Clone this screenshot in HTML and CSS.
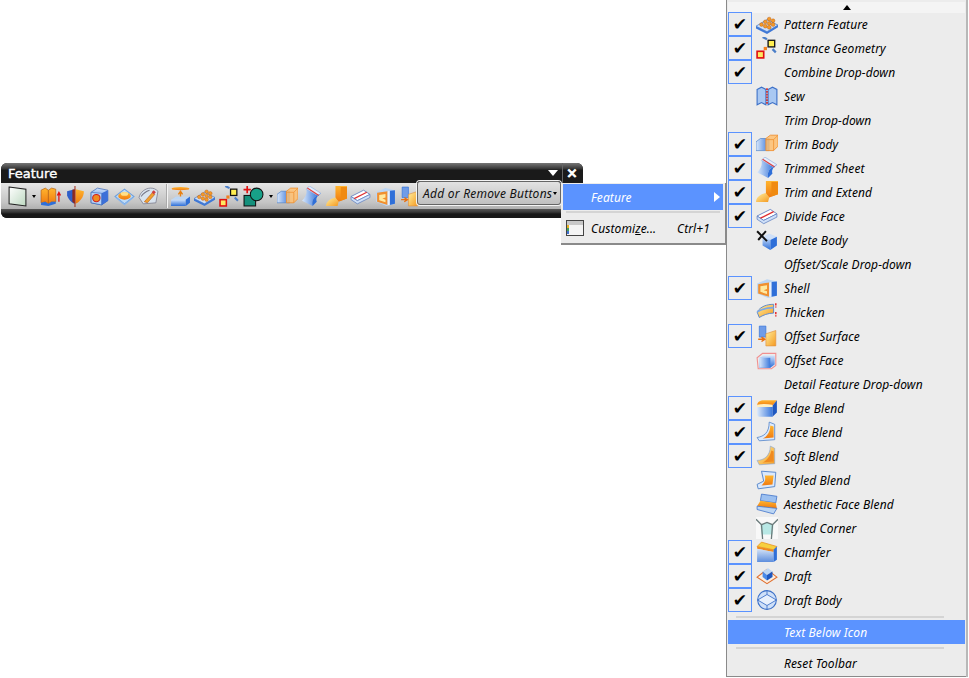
FILE: index.html
```html
<!DOCTYPE html>
<html lang="en">
<head>
<meta charset="utf-8">
<title>Feature toolbar</title>
<link rel="stylesheet" href="styles.css">
</head>
<body>
<svg class="defs" aria-hidden="true">
  <defs>
    <linearGradient id="gB" x1="0" y1="0" x2="0" y2="1"><stop offset="0" stop-color="#cfe2fb"/><stop offset="1" stop-color="#2f6fd8"/></linearGradient>
    <linearGradient id="gBh" x1="0" y1="0" x2="1" y2="0"><stop offset="0" stop-color="#dbe9fb"/><stop offset="1" stop-color="#3a78dc"/></linearGradient>
    <linearGradient id="gO" x1="0" y1="0" x2="0" y2="1"><stop offset="0" stop-color="#ffb52e"/><stop offset="1" stop-color="#f07a10"/></linearGradient>
    <linearGradient id="gY" x1="0" y1="0" x2="1" y2="1"><stop offset="0" stop-color="#fff0a0"/><stop offset="1" stop-color="#f59a20"/></linearGradient>
    <linearGradient id="gS" x1="0" y1="0" x2="1" y2="1"><stop offset="0" stop-color="#ffffff"/><stop offset="1" stop-color="#bcd8c0"/></linearGradient>

    <symbol id="i-sketch" viewBox="0 0 20 20"><path d="M2 1 18 3V19L2 17Z" fill="url(#gS)" stroke="#222" stroke-width="1"/></symbol>
    <symbol id="i-extrude" viewBox="0 0 20 20"><path d="M1 4 5 2 8 4V17L5 15 1 16Z" fill="url(#gO)" stroke="#b05a10" stroke-width=".6"/><path d="M8 4 11 2 15 3V15L11 15 8 17Z" fill="url(#gO)" stroke="#b05a10" stroke-width=".6"/><path d="M1 16 5 15 8 17 11 15 15 15 15 17 8 19 1 18Z" fill="#2f6fd8"/><path d="M18 15V7M16.500 9 18 6 19.500 9" fill="none" stroke="#e01010" stroke-width="1.200"/></symbol>
    <symbol id="i-revolve" viewBox="0 0 20 20"><path d="M2 5 9 3V17C6 16 3 12 2 9Z" fill="#2f5fc8"/><path d="M10 3 18 5C18 11 14 15 10 17Z" fill="url(#gO)"/><path d="M7 3.500 9.500 3V17L7 15Z" fill="#8b2a20"/><path d="M9.500 0V20" stroke="#a03020" stroke-width="1"/></symbol>
    <symbol id="i-hole" viewBox="0 0 20 20"><path d="M2 6 8 2 18 4 18 14 12 18 2 16Z" fill="url(#gB)" stroke="#2a5ab0" stroke-width=".6"/><path d="M12 7 18 4 18 14 12 18Z" fill="#3c70d8"/><path d="M2 6 12 7V18L2 16Z" fill="#b6d0f4" stroke="#2a5ab0" stroke-width=".5"/><circle cx="7" cy="11.500" r="3.500" fill="#f08a20" stroke="#d02020"/></symbol>
    <symbol id="i-boss" viewBox="0 0 20 20"><path d="M1 10 10 3 19 10 10 17Z" fill="#bfdcf8" stroke="#6fa0dc"/><path d="M1 10 10 17 19 10 19 11 10 18.500 1 11Z" fill="#8ab6ec"/><ellipse cx="10" cy="9.500" rx="6" ry="3.500" fill="url(#gO)"/><ellipse cx="10" cy="7.500" rx="3.500" ry="1.800" fill="#ffe08a"/></symbol>
    <symbol id="i-wedge" viewBox="0 0 20 20"><path d="M1 11C2 6 7 2 12 2 15 2 17 3 19 5L17 16 5 17Z" fill="#d9e3ee" stroke="#778" stroke-width=".7"/><path d="M6 15 14 6 16 8 9 16Z" fill="#f0a030" stroke="#b05010" stroke-width=".5"/><path d="M13 6 15 4 17 6 15 8Z" fill="#d04040"/><path d="M3 10C5 7 8 5 11 4" fill="none" stroke="#778" stroke-width="1"/></symbol>
    <symbol id="i-datum" viewBox="0 0 20 20"><ellipse cx="10" cy="2.500" rx="8.500" ry="1.600" fill="url(#gO)"/><path d="M10 11V5M8 8 10 5 12 8" fill="none" stroke="#e88010" stroke-width="1.300"/><path d="M1 13 6 10H19L15 13Z" fill="#bcd6f4"/><path d="M1 13H15V19H1Z" fill="url(#gB)"/><path d="M15 13 19 10V16L15 19Z" fill="#2f6fd8"/></symbol>
    <symbol id="i-pattern" viewBox="0 0 20 20"><path d="M0 12 10 6 20 11 10 17Z" fill="#cfe0f8" stroke="#4a7ec8" stroke-width=".7"/><path d="M0 12 10 17 20 11V13L10 19 0 14Z" fill="#3f78d6"/><g fill="#f59a28" stroke="#b85a10" stroke-width=".4"><circle cx="5" cy="10.500" r="1.700"/><circle cx="8.500" cy="8" r="1.700"/><circle cx="12" cy="5.500" r="1.700"/><circle cx="8.500" cy="12" r="1.700"/><circle cx="12" cy="9.500" r="1.700"/><circle cx="15.500" cy="7" r="1.700"/><circle cx="12" cy="13" r="1.700"/><circle cx="15.500" cy="10.500" r="1.700"/></g></symbol>
    <symbol id="i-instance" viewBox="0 0 20 20"><rect x="1" y="13" width="6" height="6" fill="#ffe860" stroke="#e01010" stroke-width="1.500"/><rect x="11" y="3" width="6" height="6" fill="#ffee50" stroke="#111" stroke-width="1.200"/><rect x="7" y="9" width="3" height="3" fill="#f08020"/><path d="M6 0 10 2" stroke="#4a7ec8" stroke-width="2"/><path d="M15 11 18 14" stroke="#4a7ec8" stroke-width="2"/></symbol>
    <symbol id="i-combine" viewBox="0 0 20 20"><rect x="1" y="9" width="11" height="10" fill="#14907c" stroke="#111" stroke-width="1"/><circle cx="13" cy="8" r="6" fill="#18a088" stroke="#111" stroke-width="1"/><path d="M4 0V7M.5 3.500H7.500" stroke="#e01010" stroke-width="1.600"/></symbol>
    <symbol id="i-sew" viewBox="0 0 20 20"><path d="M1 4 5 2 9 4V18L5 16 1 18Z" fill="#a9c8f2" stroke="#3c70c8"/><path d="M11 4 15 2 19 4V18L15 16 11 18Z" fill="#a9c8f2" stroke="#3c70c8"/><path d="M10 3V18" stroke="#d02020" stroke-width="1.400" stroke-dasharray="1.500 1"/></symbol>
    <symbol id="i-trimbody" viewBox="0 0 20 20"><path d="M0 8 4 5H12V16H0Z" fill="url(#gBh)" stroke="#4a7ec8" stroke-width=".6"/><path d="M9 5 13 2H20V12L16 16H9Z" fill="#ffc070" fill-opacity=".85" stroke="#f09030" stroke-width=".8"/><path d="M16 6V16M16 6 20 2M9 6H16" fill="none" stroke="#f09030" stroke-width=".7"/></symbol>
    <symbol id="i-trimsheet" viewBox="0 0 20 20"><path d="M5 3 16 9C12 10 10 14 11 19L1 14C4 11 6 7 5 3Z" fill="url(#gBh)"/><path d="M5 3 8 0 19 7 16 9Z" fill="#e4eefc" stroke="#7aa0dc" stroke-width=".5"/><path d="M6 2 17 9" stroke="#e04040" stroke-width="1.100"/><path d="M16 9C12 10 10 14 11 19L15 15C14 12 15 10 19 7Z" fill="#2f6fd8"/></symbol>
    <symbol id="i-trimext" viewBox="0 0 20 20"><path d="M9 0H20V12L12 15 9 12Z" fill="url(#gO)"/><path d="M14 1H20V12L14 14Z" fill="#f08a10"/><path d="M0 19C0 15 4 12 9 11L12 15 11 19Z" fill="url(#gY)"/></symbol>
    <symbol id="i-divide" viewBox="0 0 20 20"><path d="M1 10 13 4 19 8 7 14Z" fill="#fff" stroke="#6080c0" stroke-width=".8"/><path d="M1 10 7 14 19 8V11L7 17 1 13Z" fill="#cfe0f8" stroke="#6080c0" stroke-width=".7"/><path d="M4 12 16 6" stroke="#e03030" stroke-width="1.200"/></symbol>
    <symbol id="i-delete" viewBox="0 0 20 20"><path d="M6 7 12 4 19 7V15L13 19 6 15Z" fill="#cfe0f8"/><path d="M13 10 19 7V15L13 19Z" fill="#2f6fd8"/><path d="M6 7 13 10V19L6 15Z" fill="url(#gB)"/><path d="M1 2 10 11M9 2 2 10" stroke="#111" stroke-width="1.800"/></symbol>
    <symbol id="i-shell" viewBox="0 0 20 20"><path d="M1 6 10 2 19 4V17L11 19 1 15Z" fill="#bcd6f4"/><path d="M2 6.500 12 5V18L2 15Z" fill="#f09030"/><path d="M4 8.500 10 7.500V11L7 12 10 13V15.500L4 13.500Z" fill="#ffe9a0"/><path d="M14 4.500 19 4V17L14 18Z" fill="#2f6fd8"/><path d="M12 5 14 4.500V18L12 18Z" fill="#e8f0fc"/></symbol>
    <symbol id="i-thicken" viewBox="0 0 20 20"><path d="M1 10C4 5 10 3 16 3V11C11 11 6 13 3 15Z" fill="url(#gY)" stroke="#5080c8" stroke-width=".8"/><path d="M1 10C4 8 10 6 16 6" fill="none" stroke="#7aa8e8" stroke-width="1.500"/><path d="M18 2V6M18 10V14" stroke="#e83030" stroke-width="1.400" stroke-dasharray="2 1"/></symbol>
    <symbol id="i-offsurf" viewBox="0 0 20 20"><path d="M3 1H9V11H3Z" fill="#6f9ce8" stroke="#2f6fd8" stroke-width=".6"/><path d="M9 8 18 5V19H9Z" fill="url(#gY)" stroke="#e09040" stroke-width=".6"/><path d="M2 13H8M5 11 8 13 5 15" fill="none" stroke="#e87010" stroke-width="1.300"/></symbol>
    <symbol id="i-offface" viewBox="0 0 20 20"><path d="M1 8 6 4H18V15L14 18H2Z" fill="none" stroke="#f09090" stroke-width="1"/><path d="M3 8 7 6H17V14L13 17H3Z" fill="url(#gB)"/><path d="M3 8H13V17H3Z" fill="url(#gBh)"/></symbol>
    <symbol id="i-edgeblend" viewBox="0 0 20 20"><path d="M1 8C1 4 4 3 8 3H19L15 8Z" fill="url(#gO)"/><path d="M1 8H15V18H3C2 18 1 17 1 16Z" fill="url(#gBh)"/><path d="M15 8 19 3V14L15 18Z" fill="#1f58c0"/><path d="M1 7C5 6 10 6 15 7V9H1Z" fill="#fff0c0"/></symbol>
    <symbol id="i-faceblend" viewBox="0 0 20 20"><path d="M12 1 17 3V17L3 18 1 15C7 14 12 11 12 1Z" fill="#dbe9fb" stroke="#4a7ec8" stroke-width=".7"/><path d="M13 4 16 5V15L6 16C10 14 13 10 13 4Z" fill="url(#gO)"/></symbol>
    <symbol id="i-softblend" viewBox="0 0 20 20"><path d="M13 1 17 3V17L3 18 1 14C7 14 13 10 13 1Z" fill="url(#gY)" stroke="#8aa8d8" stroke-width=".6"/><path d="M14 5 16 6V15L6 16C10 14 13 10 14 5Z" fill="#f08a20"/></symbol>
    <symbol id="i-styledblend" viewBox="0 0 20 20"><path d="M5 2 18 3 17 16 2 18 1 14 7 11Z" fill="#dbe9fb" stroke="#4a7ec8" stroke-width=".8"/><path d="M8 6 16 6 15 14 5 15C8 12 9 10 8 6Z" fill="url(#gO)"/></symbol>
    <symbol id="i-aesthetic" viewBox="0 0 20 20"><path d="M5 1 19 3 18 9 4 7Z" fill="#9cc0f0" stroke="#3c70c8" stroke-width=".7"/><path d="M4 7 18 9 19 14 1 12Z" fill="url(#gO)"/><path d="M1 12 19 14 16 19 1 15Z" fill="#bcd6f4" stroke="#3c70c8" stroke-width=".7"/></symbol>
    <symbol id="i-corner" viewBox="0 0 20 20"><rect width="20" height="20" fill="#f8f8f8"/><path d="M4 7 10 5 16 7 15 16H5Z" fill="#a8e4e0" fill-opacity=".8"/><path d="M0 2 5 7 10 5 15 7 20 2M5 7 6 20M15 7 14 20" fill="none" stroke="#6a7a7a" stroke-width="1.200"/></symbol>
    <symbol id="i-chamfer" viewBox="0 0 20 20"><path d="M1 5 5 1 19 5 16 8Z" fill="#f6d040" stroke="#e89020" stroke-width=".7"/><path d="M1 5 16 8V10L1 7Z" fill="#f08a20"/><path d="M1 7 16 10V19H1Z" fill="url(#gB)" opacity=".75"/><path d="M16 8 19 5V17L16 19Z" fill="#2f6fd8"/></symbol>
    <symbol id="i-draft" viewBox="0 0 20 20"><path d="M1 11 10 4 19 11 10 17Z" fill="#fbeee0" stroke="#e07030" stroke-width="1"/><path d="M6 6 11 3 15 6 10 9Z" fill="#bcd6f4"/><path d="M6 6 10 9V14L6 11Z" fill="#4a8ae8"/><path d="M10 9 15 6V11L10 14Z" fill="#1f58c0"/></symbol>
    <symbol id="i-draftbody" viewBox="0 0 20 20"><circle cx="10" cy="10" r="8.500" fill="#cfe0f8" stroke="#3c70c8"/><path d="M1.500 10 10 5 18.500 10 10 15ZM10 1.500V5M10 15V18.500" fill="#e8f0fc" stroke="#3c70c8" stroke-width=".8"/></symbol>
    <symbol id="i-customize" viewBox="0 0 18 16"><rect x=".5" y=".5" width="17" height="15" fill="#f4f4f4" stroke="#444"/><rect x="1" y="1" width="16" height="4" fill="#c8c8c8"/><rect x="1" y="5" width="2" height="3" fill="#e8b020"/><rect x="1" y="8" width="2" height="3" fill="#40a060"/><rect x="1" y="11" width="2" height="3" fill="#4070d0"/></symbol>
  </defs>
</svg>

<section class="toolbar">
  <header class="toolbar-title">
    <span class="title-text">Feature</span>
    <span class="title-menu"></span>
    <span class="title-close">✕</span>
  </header>
  <div class="toolbar-body">
    <span class="tool"><svg><use href="#i-sketch"/></svg></span><span class="drop"></span>
    <span class="tool"><svg><use href="#i-extrude"/></svg></span>
    <span class="tool"><svg><use href="#i-revolve"/></svg></span>
    <span class="tool"><svg><use href="#i-hole"/></svg></span>
    <span class="tool"><svg><use href="#i-boss"/></svg></span>
    <span class="tool"><svg><use href="#i-wedge"/></svg></span>
    <span class="sep"></span>
    <span class="tool"><svg><use href="#i-datum"/></svg></span>
    <span class="tool"><svg><use href="#i-pattern"/></svg></span>
    <span class="tool"><svg><use href="#i-instance"/></svg></span>
    <span class="tool"><svg><use href="#i-combine"/></svg></span><span class="drop"></span>
    <span class="tool"><svg><use href="#i-trimbody"/></svg></span>
    <span class="tool"><svg><use href="#i-trimsheet"/></svg></span>
    <span class="tool"><svg><use href="#i-trimext"/></svg></span>
    <span class="tool"><svg><use href="#i-divide"/></svg></span>
    <span class="tool"><svg><use href="#i-shell"/></svg></span>
    <span class="tool"><svg><use href="#i-offsurf"/></svg></span>
  </div>
  <div class="toolbar-foot"></div>
</section>

<div class="add-remove"><span>Add or Remove Buttons</span><span class="add-drop"></span></div>

<nav class="submenu">
  <div class="sub-row active"><span class="sub-label">Feature</span><span class="sub-arrow"></span></div>
  <div class="rule sub-rule"></div>
  <div class="sub-row"><svg class="sub-icon"><use href="#i-customize"/></svg><span class="sub-label">Customi<u>z</u>e...</span><span class="sub-key">Ctrl+1</span></div>
</nav>

<nav class="menu">
  <div class="scroll-up"><span class="up-arrow"></span></div>
  <div class="row"><span class="check on">✔</span><svg class="row-icon"><use href="#i-pattern"/></svg><span>Pattern Feature</span></div>
  <div class="row"><span class="check on">✔</span><svg class="row-icon"><use href="#i-instance"/></svg><span>Instance Geometry</span></div>
  <div class="row"><span class="check on">✔</span><span class="row-icon"></span><span>Combine Drop-down</span></div>
  <div class="row"><span class="check"></span><svg class="row-icon"><use href="#i-sew"/></svg><span>Sew</span></div>
  <div class="row"><span class="check"></span><span class="row-icon"></span><span>Trim Drop-down</span></div>
  <div class="row"><span class="check on">✔</span><svg class="row-icon"><use href="#i-trimbody"/></svg><span>Trim Body</span></div>
  <div class="row"><span class="check on">✔</span><svg class="row-icon"><use href="#i-trimsheet"/></svg><span>Trimmed Sheet</span></div>
  <div class="row"><span class="check on">✔</span><svg class="row-icon"><use href="#i-trimext"/></svg><span>Trim and Extend</span></div>
  <div class="row"><span class="check on">✔</span><svg class="row-icon"><use href="#i-divide"/></svg><span>Divide Face</span></div>
  <div class="row"><span class="check"></span><svg class="row-icon"><use href="#i-delete"/></svg><span>Delete Body</span></div>
  <div class="row"><span class="check"></span><span class="row-icon"></span><span>Offset/Scale Drop-down</span></div>
  <div class="row"><span class="check on">✔</span><svg class="row-icon"><use href="#i-shell"/></svg><span>Shell</span></div>
  <div class="row"><span class="check"></span><svg class="row-icon"><use href="#i-thicken"/></svg><span>Thicken</span></div>
  <div class="row"><span class="check on">✔</span><svg class="row-icon"><use href="#i-offsurf"/></svg><span>Offset Surface</span></div>
  <div class="row"><span class="check"></span><svg class="row-icon"><use href="#i-offface"/></svg><span>Offset Face</span></div>
  <div class="row"><span class="check"></span><span class="row-icon"></span><span>Detail Feature Drop-down</span></div>
  <div class="row"><span class="check on">✔</span><svg class="row-icon"><use href="#i-edgeblend"/></svg><span>Edge Blend</span></div>
  <div class="row"><span class="check on">✔</span><svg class="row-icon"><use href="#i-faceblend"/></svg><span>Face Blend</span></div>
  <div class="row"><span class="check on">✔</span><svg class="row-icon"><use href="#i-softblend"/></svg><span>Soft Blend</span></div>
  <div class="row"><span class="check"></span><svg class="row-icon"><use href="#i-styledblend"/></svg><span>Styled Blend</span></div>
  <div class="row"><span class="check"></span><svg class="row-icon"><use href="#i-aesthetic"/></svg><span>Aesthetic Face Blend</span></div>
  <div class="row"><span class="check"></span><svg class="row-icon"><use href="#i-corner"/></svg><span>Styled Corner</span></div>
  <div class="row"><span class="check on">✔</span><svg class="row-icon"><use href="#i-chamfer"/></svg><span>Chamfer</span></div>
  <div class="row"><span class="check on">✔</span><svg class="row-icon"><use href="#i-draft"/></svg><span>Draft</span></div>
  <div class="row"><span class="check on">✔</span><svg class="row-icon"><use href="#i-draftbody"/></svg><span>Draft Body</span></div>
  <div class="rule menu-rule list-end"></div>
  <div class="row text-row active"><span>Text Below Icon</span></div>
  <div class="rule menu-rule"></div>
  <div class="row text-row"><span>Reset Toolbar</span></div>
</nav>
</body>
</html>
```

FILE: styles.css
```css
html, body {
  margin: 0;
  height: 100%;
  background: #fff;
  overflow: hidden;
}
body {
  font-family: "Noto Sans", "DejaVu Sans", sans-serif;
  font-size: 12px;
  letter-spacing: .1px;
  color: #000;
}
.defs {
  position: absolute;
  width: 0;
  height: 0;
}

/* Floating toolbar window */
.toolbar {
  position: absolute;
  left: 1px;
  top: 163px;
  width: 582px;
  height: 55px;
  display: flex;
  flex-direction: column;
  border-radius: 6px 6px 0 6px;
  overflow: hidden;
  background: #1a1a1a;
}
.toolbar-title {
  height: 20px;
  display: flex;
  align-items: center;
  background: linear-gradient(#777 0, #555 3px, #333 6px, #1a1a1a 7px);
}
.title-text {
  margin-left: 7px;
  font-family: "DejaVu Sans", sans-serif;
  font-size: 13px;
  letter-spacing: 0;
  color: #fff;
  -webkit-text-stroke: .4px #fff;
}
.title-menu {
  margin-left: auto;
  margin-right: 4px;
  width: 0;
  height: 0;
  border-left: 5px solid transparent;
  border-right: 5px solid transparent;
  border-top: 6px solid #fff;
}
.title-close {
  width: 18px;
  height: 20px;
  margin-right: 2px;
  display: flex;
  align-items: center;
  justify-content: center;
  border-left: 1px solid #666;
  color: #fff;
  font-family: "DejaVu Sans", sans-serif;
  font-size: 13px;
  -webkit-text-stroke: 1px #fff;
}
.toolbar-body {
  height: 26px;
  display: flex;
  align-items: center;
  padding-left: 4px;
  background: linear-gradient(#e6e6e6, #c4c4c4 75%, #b0b0b0);
}
.toolbar-foot {
  height: 9px;
  background: linear-gradient(#555 0, #3a3a3a 3px, #181818 5px);
}
.tool {
  flex: none;
  width: 24.5px;
  height: 21px;
  display: flex;
  justify-content: center;
}
.tool svg {
  width: 21px;
  height: 21px;
}
.drop {
  flex: none;
  width: 9px;
  display: flex;
  justify-content: center;
}
.drop::before {
  content: "";
  width: 0;
  height: 0;
  border-left: 2.5px solid transparent;
  border-right: 2.5px solid transparent;
  border-top: 3px solid #000;
}
.sep {
  flex: none;
  width: 1px;
  height: 24px;
  margin: 0 0 0 5px;
  background: #f4f4f4;
  border-left: 1px solid #aaa;
}

/* Button over the toolbar */
.add-remove {
  position: absolute;
  left: 417px;
  top: 181px;
  width: 144px;
  height: 24px;
  box-sizing: border-box;
  display: flex;
  align-items: center;
  padding-left: 5px;
  white-space: nowrap;
  background: linear-gradient(#e2e2e2, #c0c0c0);
  border: 1px solid #666;
  border-radius: 3px;
  box-shadow: 0 0 0 1px #f4f4f4;
  font-style: italic;
  letter-spacing: .25px;
  color: #111;
}
.add-drop {
  margin-left: auto;
  margin-right: 3px;
  width: 0;
  height: 0;
  border-left: 2.5px solid transparent;
  border-right: 2.5px solid transparent;
  border-top: 3px solid #000;
}

/* Context menus */
.submenu {
  position: absolute;
  left: 561px;
  top: 183px;
  width: 166px;
  height: 62px;
  box-sizing: border-box;
  padding: 1px 2px;
  background: #ececec;
  border: 1px solid #8a8a8a;
  border-width: 0 2px 2px 0;
  font-style: italic;
}
.sub-row {
  height: 26px;
  display: flex;
  align-items: center;
  position: relative;
  padding-left: 28px;
}
.sub-row.active {
  background: #5b93ff;
  color: #fff;
}
.sub-arrow {
  position: absolute;
  right: 3px;
  width: 0;
  height: 0;
  border-top: 5px solid transparent;
  border-bottom: 5px solid transparent;
  border-left: 6px solid #fff;
}
.sub-icon {
  position: absolute;
  left: 3px;
  top: 5px;
  width: 18px;
  height: 16px;
}
.sub-key {
  position: absolute;
  right: 13px;
}
.rule {
  height: 2px;
  flex: none;
  background: #d4d4d4;
}
.sub-rule {
  margin: 1px 3px 2px 3px;
}

.menu {
  position: absolute;
  left: 726px;
  top: 0;
  width: 240px;
  height: 677px;
  box-sizing: border-box;
  padding: 2px 0 0 1px;
  display: flex;
  flex-direction: column;
  background: #ececec;
  border-left: 1px solid #8a8a8a;
  border-bottom: 1px solid #8a8a8a;
  box-shadow: 2px 0 0 #b8b8b8;
  font-style: italic;
}
.scroll-up {
  height: 11px;
  flex: none;
  margin: 0 1px -1px 0;
  display: flex;
  justify-content: center;
  align-items: center;
  background: #f4f4f4;
}
.up-arrow {
  width: 0;
  height: 0;
  border-left: 4px solid transparent;
  border-right: 4px solid transparent;
  border-bottom: 5px solid #000;
}
.row {
  height: 24px;
  flex: none;
  display: flex;
  align-items: center;
}
.check {
  flex: none;
  width: 24px;
  height: 24px;
  box-sizing: border-box;
  display: flex;
  align-items: center;
  justify-content: center;
  font-family: "DejaVu Sans", sans-serif;
  font-size: 17px;
  font-style: normal;
  border: 1px solid transparent;
}
.check.on {
  border-color: #5b93ff;
}
.row-icon {
  flex: none;
  width: 22px;
  height: 22px;
  margin: 0 6px 0 4px;
}
.menu-rule {
  margin: 3px 22px 2px 8px;
}
.menu-rule.list-end {
  margin-top: 4px;
}
.text-row {
  padding-left: 56px;
  margin-right: 1px;
}
.text-row.active {
  background: #5b93ff;
  color: #fff;
}
```
